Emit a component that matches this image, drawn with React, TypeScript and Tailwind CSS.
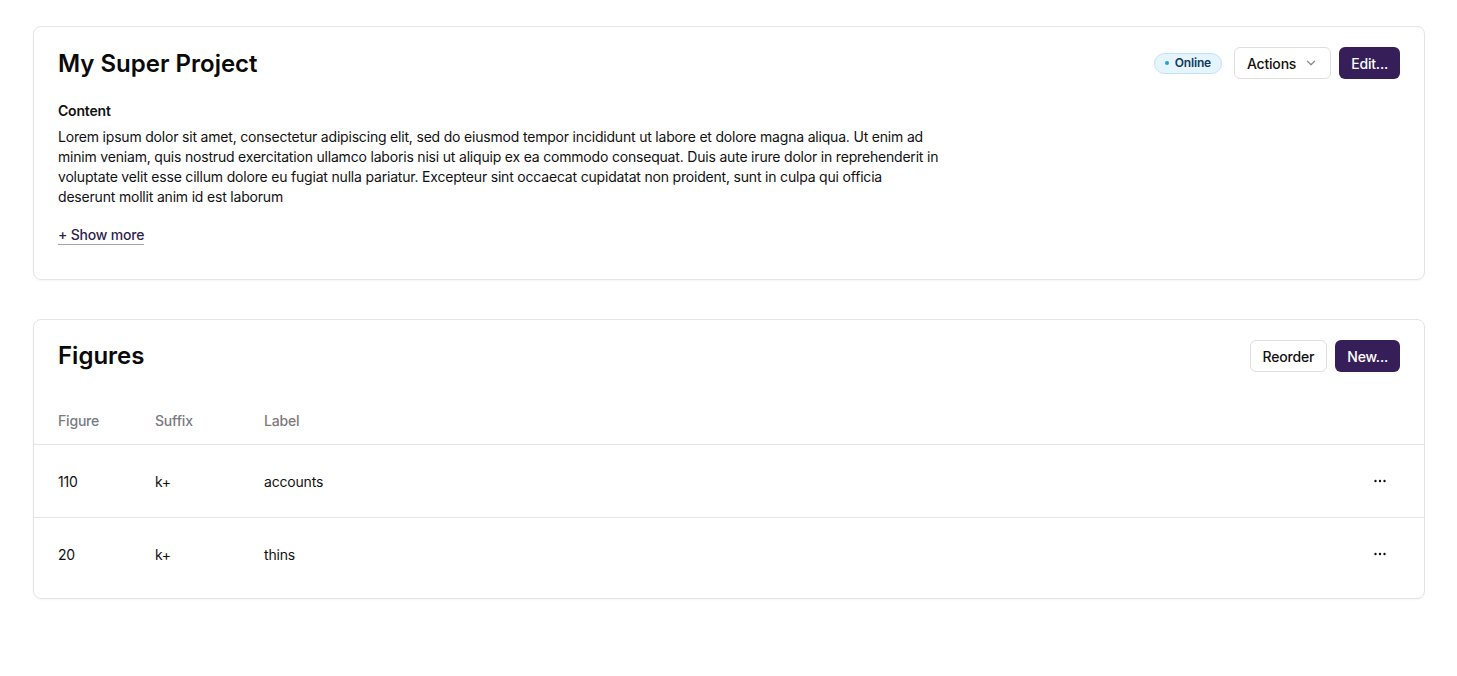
import React from "react";

const Dots = () => (
  <svg width="16" height="16" viewBox="0 0 16 16" fill="currentColor">
    <circle cx="3.5" cy="8" r="1.2" />
    <circle cx="8" cy="8" r="1.2" />
    <circle cx="12.5" cy="8" r="1.2" />
  </svg>
);

const Chevron = () => (
  <svg width="14" height="14" viewBox="0 0 16 16" fill="none" stroke="#8a8a8a" strokeWidth="1.4" strokeLinecap="round" strokeLinejoin="round">
    <path d="M4 6l4 4 4-4" />
  </svg>
);

const rows = [
  { figure: "110", suffix: "k+", label: "accounts" },
  { figure: "20", suffix: "k+", label: "thins" },
];

export default function App() {
  return (
    <div
      className="min-h-screen bg-white text-[#111] pl-[33px] pr-[32px] pt-[26px] flex flex-col gap-[39px] tracking-[-0.012em]"
      style={{ fontFamily: "Inter, 'Noto Sans', sans-serif" }}
    >
      <section className="border border-[#e4e4e7] rounded-lg shadow-[0_1px_2px_rgba(0,0,0,0.04)] px-6 pt-[20px] pb-[33px]">
        <div className="flex items-start justify-between">
          <h1 className="mt-[1px] text-[24px] leading-8 font-semibold tracking-normal text-[#0a0a0a]">My Super Project</h1>
          <div className="flex items-center gap-2">
            <span className="mr-[4px] inline-flex items-center gap-[6px] h-[21px] px-[10px] rounded-full bg-[#e6f4fd] border border-[#bfe3f9] text-[12px] font-semibold text-[#0c3b5e]">
              <span className="w-[4px] h-[4px] rounded-full bg-[#1da1e6]" />
              Online
            </span>
            <button className="h-8 px-3 inline-flex items-center gap-2 rounded-md border border-[#dedede] bg-white text-[14px] font-medium text-[#111]">
              Actions
              <Chevron />
            </button>
            <button className="h-8 px-3 inline-flex items-center rounded-md bg-[#361f59] text-[14px] font-medium text-white">
              Edit...
            </button>
          </div>
        </div>
        <div className="mt-[21px] text-[14px] leading-5 font-semibold">Content</div>
        <p className="mt-[6px] max-w-[882px] text-[14px] leading-5 text-[#111]">
          Lorem ipsum dolor sit amet, consectetur adipiscing elit, sed do eiusmod tempor incididunt ut labore et dolore magna aliqua. Ut enim ad minim veniam, quis nostrud exercitation ullamco laboris nisi ut aliquip ex ea commodo consequat. Duis aute irure dolor in reprehenderit in voluptate velit esse cillum dolore eu fugiat nulla pariatur. Excepteur sint occaecat cupidatat non proident, sunt in culpa qui officia deserunt mollit anim id est laborum
        </p>
        <div className="mt-[15px]">
          <span className="text-[14px] leading-5 font-medium text-[#2e1f4f] border-b border-[#a79bc4] pb-[1px]">+ Show more</span>
        </div>
      </section>

      <section className="border border-[#e4e4e7] rounded-lg shadow-[0_1px_2px_rgba(0,0,0,0.04)] pt-[20px] pb-2">
        <div className="flex items-center justify-between px-6">
          <h2 className="text-[24px] leading-8 font-semibold tracking-normal text-[#0a0a0a]">Figures</h2>
          <div className="flex items-center gap-2">
            <button className="h-8 px-3 inline-flex items-center rounded-md border border-[#dedede] bg-white text-[14px] font-medium text-[#111]">
              Reorder
            </button>
            <button className="h-8 px-3 inline-flex items-center rounded-md bg-[#361f59] text-[14px] font-medium text-white">
              New...
            </button>
          </div>
        </div>
        <div className="mt-6">
          <div className="flex items-center h-[49px] border-b border-[#e4e4e7] px-6 text-[14px] font-medium text-[#7a7a80]">
            <div className="w-[97px]">Figure</div>
            <div className="w-[109px]">Suffix</div>
            <div className="flex-1">Label</div>
          </div>
          {rows.map((r, i) => (
            <div
              key={i}
              className={`flex items-center px-6 text-[14px] text-[#111] ${i < rows.length - 1 ? "h-[73px] border-b border-[#e4e4e7]" : "h-[72px]"}`}
            >
              <div className="w-[97px]">{r.figure}</div>
              <div className="w-[109px]">{r.suffix}</div>
              <div className="flex-1">{r.label}</div>
              <div className="w-8 flex justify-center mr-[4px] text-[#111]">
                <Dots />
              </div>
            </div>
          ))}
        </div>
      </section>
    </div>
  );
}
